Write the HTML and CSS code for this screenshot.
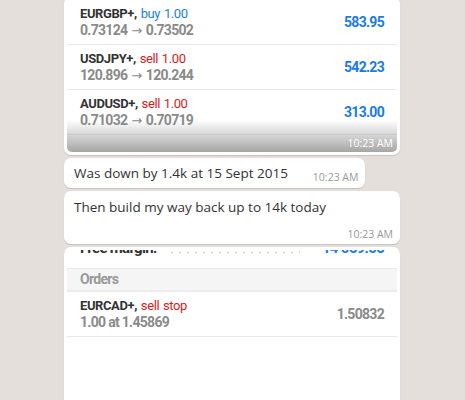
FILE: index.html
```html
<!DOCTYPE html>
<html lang="en">
<head>
    <meta charset="UTF-8">
    <title>Chat</title>
    <link rel="stylesheet" href="styles.css">
</head>
<body>
    <div class="chat">
        <!-- screenshot: open positions -->
        <div class="bubble bubble_shot">
            <div class="shot">
                <div class="shot_row">
                    <div class="shot_row_info">
                        <div class="shot_row_title">EURGBP+, <span class="buy">buy 1.00</span></div>
                        <div class="shot_row_sub">0.73124 <i class="arrow">→</i> 0.73502</div>
                    </div>
                    <div class="shot_row_value">583.95</div>
                </div>
                <div class="shot_row">
                    <div class="shot_row_info">
                        <div class="shot_row_title">USDJPY+, <span class="sell">sell 1.00</span></div>
                        <div class="shot_row_sub">120.896 <i class="arrow">→</i> 120.244</div>
                    </div>
                    <div class="shot_row_value">542.23</div>
                </div>
                <div class="shot_row">
                    <div class="shot_row_info">
                        <div class="shot_row_title">AUDUSD+, <span class="sell">sell 1.00</span></div>
                        <div class="shot_row_sub">0.71032 <i class="arrow">→</i> 0.70719</div>
                    </div>
                    <div class="shot_row_value">313.00</div>
                </div>
                <div class="shot_row shot_row_blank"></div>
                <div class="shot_fade">
                    <span class="shot_time">10:23 AM</span>
                </div>
            </div>
        </div>

        <div class="bubble bubble_text">
            <span class="bubble_msg">Was down by 1.4k at 15 Sept 2015</span>
            <span class="bubble_time">10:23 AM</span>
        </div>

        <div class="bubble bubble_text bubble_wrap">
            <div class="bubble_msg">Then build my way back up to 14k today</div>
            <div class="bubble_time">10:23 AM</div>
        </div>

        <!-- screenshot: orders -->
        <div class="bubble bubble_shot bubble_last">
            <div class="shot shot_open">
                <div class="shot_margin">
                    <span class="shot_margin_label">Free margin:</span>
                    <span class="shot_margin_dots"></span>
                    <span class="shot_margin_value">14 069.06</span>
                </div>
                <div class="shot_section">Orders</div>
                <div class="shot_row">
                    <div class="shot_row_info">
                        <div class="shot_row_title">EURCAD+, <span class="sell">sell stop</span></div>
                        <div class="shot_row_sub">1.00 at 1.45869</div>
                    </div>
                    <div class="shot_row_value shot_row_value_grey">1.50832</div>
                </div>
            </div>
        </div>
    </div>
</body>
</html>
```

FILE: styles.css
```css
*{
    margin: 0;
    padding: 0;
    box-sizing: border-box;
}
body{
    background: #e4dfdb;
    font-family: "Open Sans", "Noto Sans", sans-serif;
    overflow: hidden;
}
.chat{
    width: 336px;
    margin: -3px 0 0 64px;
    display: flex;
    flex-direction: column;
    align-items: flex-start;
    gap: 3px;
}
.bubble{
    background: #fff;
    border-radius: 7px;
    box-shadow: 0 1px 1px rgba(0,0,0,0.13);
}
.bubble_shot{
    width: 336px;
    padding: 3px;
}
.shot{
    border-radius: 0 0 5px 5px;
    overflow: hidden;
    position: relative;
    background: #fff;
    font-family: Roboto, sans-serif;
    letter-spacing: -0.7px;
}
.shot_row{
    height: 45px;
    padding: 0 13px;
    display: flex;
    align-items: center;
    justify-content: space-between;
    border-bottom: 1px solid #e9e9e9;
}
.shot_row_blank{
    height: 17px;
    border-bottom: 0;
}
.shot_row_title{
    font-size: 13px;
    line-height: 16px;
    font-weight: bold;
    letter-spacing: -0.4px;
    word-spacing: 1px;
    color: #333;
}
.shot_row_title span{
    font-weight: normal;
}
.buy{
    color: #1a80e6;
}
.sell{
    color: #d31e1e;
}
.shot_row_sub{
    font-size: 14px;
    line-height: 16px;
    font-weight: bold;
    color: #8a8a8a;
}
.arrow{
    font-style: normal;
    font-family: "DejaVu Sans", sans-serif;
    font-weight: normal;
    font-size: 13px;
    letter-spacing: 0;
    margin: 0 1px;
}
.shot_row_value{
    font-size: 14px;
    font-weight: bold;
    color: #1a7be3;
}
.shot_row_value_grey{
    color: #8a8a8a;
}
.shot_fade{
    position: absolute;
    left: 0;
    right: 0;
    bottom: 0;
    height: 32px;
    background: linear-gradient(rgba(160,160,160,0), rgba(150,150,150,0.85));
    display: flex;
    align-items: flex-end;
    justify-content: flex-end;
    padding: 0 4px 2px 0;
}
.shot_time{
    font-family: "Open Sans", sans-serif;
    font-size: 10.5px;
    line-height: 14px;
    letter-spacing: 0;
    color: #fff;
}
.bubble_text{
    display: flex;
    align-items: flex-end;
    gap: 25px;
    padding: 6px 7px 4px 10px;
    color: #333;
}
.bubble_msg{
    font-size: 13.5px;
    line-height: 18px;
    padding-bottom: 2px;
}
.bubble_time{
    font-size: 10.5px;
    line-height: 14px;
    color: #999;
}
.bubble_wrap{
    width: 336px;
    flex-direction: column;
    align-items: stretch;
    gap: 9px;
    padding-top: 7px;
    padding-bottom: 3px;
}
.bubble_wrap .bubble_time{
    text-align: right;
}
.bubble_last{
    height: 170px;
}
.shot_open{
    border-radius: 5px 5px 0 0;
    height: 100%;
}
.shot_margin{
    height: 19px;
    padding: 0 13px;
    display: flex;
    align-items: flex-end;
    gap: 12px;
    border-bottom: 1px solid #e9e9e9;
}
.shot_margin_label,
.shot_margin_value{
    margin-bottom: 12px;
    font-size: 15px;
    line-height: 16px;
    font-weight: bold;
    color: #333;
}
.shot_margin_value{
    color: #1a7be3;
}
.shot_margin_dots{
    flex: 1;
    align-self: flex-start;
    margin: 1px 10px 0 0;
    height: 3px;
    background: radial-gradient(circle, #d6d6d6 1px, transparent 1.2px) 0 0 / 8px 3px repeat-x;
}
.shot_section{
    height: 23px;
    line-height: 21px;
    padding: 0 13px;
    background: #f5f5f5;
    border-bottom: 2px solid #ececec;
    font-size: 14px;
    font-weight: bold;
    color: #999;
}
```
